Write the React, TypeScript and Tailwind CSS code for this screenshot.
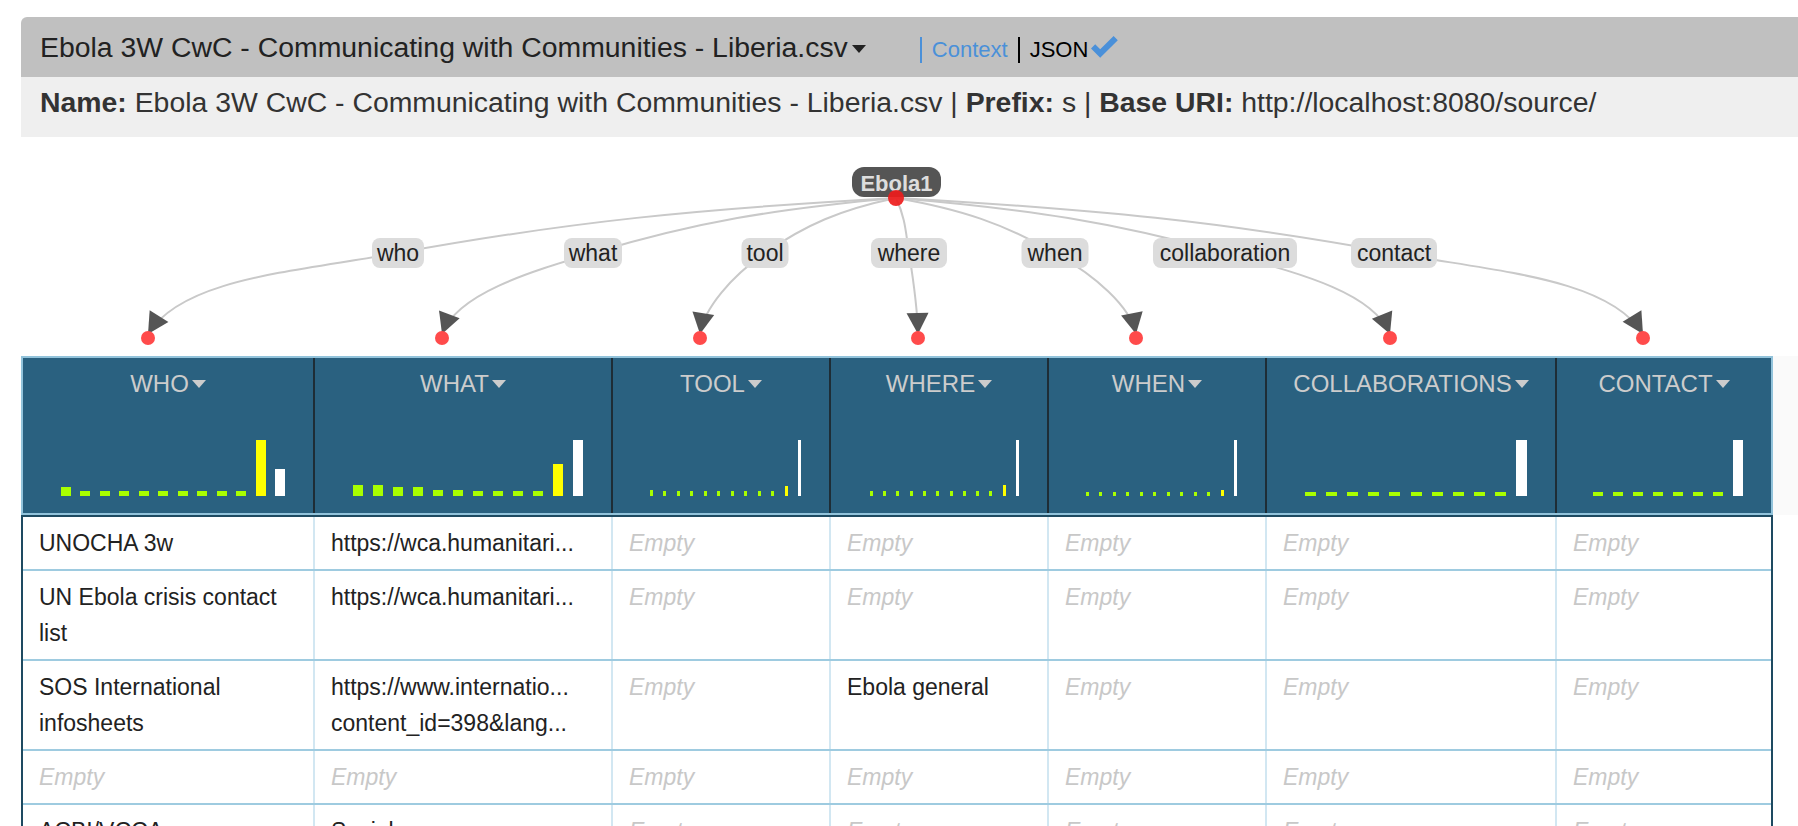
import React from "react";

type Bar = { h: number; c: "g" | "y" | "w" };

type Column = {
  title: string;
  w: number;
  gap: number;
  bars: Bar[];
};

const g = (h: number): Bar => ({ h, c: "g" });
const y = (h: number): Bar => ({ h, c: "y" });
const w = (h: number): Bar => ({ h, c: "w" });

const columns: Column[] = [
  { title: "WHO", w: 10, gap: 9.5, bars: [g(9), g(5), g(5), g(5), g(5), g(5), g(5), g(5), g(5), g(5), y(56), w(27)] },
  { title: "WHAT", w: 10, gap: 10, bars: [g(11), g(11), g(9), g(9), g(6), g(6), g(5), g(5), g(5), g(5), y(32), w(56)] },
  { title: "TOOL", w: 3, gap: 10.5, bars: [g(6), g(5), g(5), g(5), g(5), g(5), g(5), g(5), g(5), g(5), y(10), w(56)] },
  { title: "WHERE", w: 3, gap: 10.3, bars: [g(5), g(5), g(5), g(5), g(5), g(5), g(5), g(5), g(5), g(5), y(11), w(56)] },
  { title: "WHEN", w: 3, gap: 10.5, bars: [g(4), g(4), g(4), g(4), g(4), g(4), g(4), g(4), g(4), g(4), y(6), w(56)] },
  { title: "COLLABORATIONS", w: 11, gap: 10.1, bars: [g(4), g(4), g(4), g(4), g(4), g(4), g(4), g(4), g(4), g(4), w(56)] },
  { title: "CONTACT", w: 10, gap: 10, bars: [g(4), g(4), g(4), g(4), g(4), g(4), g(4), w(56)] },
];

const barColor = { g: "bg-[#a8ff00]", y: "bg-[#ffff00]", w: "bg-white" };

const E = null;
const rows: (string | string[] | null)[][] = [
  ["UNOCHA 3w", "https://wca.humanitari...", E, E, E, E, E],
  ["UN Ebola crisis contact list", "https://wca.humanitari...", E, E, E, E, E],
  ["SOS International infosheets", ["https://www.internatio...", "content_id=398&lang..."], E, "Ebola general", E, E, E],
  [E, E, E, E, E, E, E],
  ["ACBI/VCCA", "Social...", E, E, E, E, E],
  [E, E, E, E, E, E, E],
];

// graph geometry, in page coordinates
const S = { x: 896, y: 198 };
const LY = 253;
const TY = 334;
const edges = [
  { label: "who", lx: 398, lw: 52, tx: 148 },
  { label: "what", lx: 593, lw: 58, tx: 442 },
  { label: "tool", lx: 765, lw: 47, tx: 700 },
  { label: "where", lx: 909, lw: 76, tx: 918 },
  { label: "when", lx: 1055, lw: 67, tx: 1136 },
  { label: "collaboration", lx: 1225, lw: 144, tx: 1390 },
  { label: "contact", lx: 1394, lw: 86, tx: 1643 },
];

const norm = (x: number, y: number) => {
  const l = Math.hypot(x, y) || 1;
  return [x / l, y / l];
};

const edgeGeom = (lx: number, tx: number) => {
  const M = { x: lx, y: LY };
  const T = { x: tx, y: TY };
  const [dmx, dmy] = norm(T.x - S.x, T.y - S.y);
  const [dsx, dsy] = norm(M.x - S.x, (M.y - S.y) * 0.5);
  const [ax, ay] = norm(0.2 * (T.x - M.x), T.y - M.y);
  const L1 = Math.hypot(M.x - S.x, M.y - S.y);
  const L2 = Math.hypot(T.x - M.x, T.y - M.y);
  const d =
    `M${S.x},${S.y} C${S.x + dsx * L1 * 0.4},${S.y + dsy * L1 * 0.4} ${M.x - dmx * L1 * 0.35},${M.y - dmy * L1 * 0.35} ${M.x},${M.y} ` +
    `C${M.x + dmx * L2 * 0.4},${M.y + dmy * L2 * 0.4} ${T.x - ax * L2 * 0.25},${T.y - ay * L2 * 0.25} ${T.x},${T.y}`;
  const bx = T.x - ax * 21;
  const by = T.y - ay * 21;
  const px = -ay;
  const py = ax;
  const pts = `${T.x},${T.y} ${bx + px * 11},${by + py * 11} ${bx - px * 11},${by - py * 11}`;
  return { d, pts };
};

const Caret = ({ className }: { className: string }) => (
  <svg width="14" height="8" viewBox="0 0 14 8" className={className}>
    <polygon points="0,0 14,0 7,8" />
  </svg>
);

const Graph = () => (
  <svg width="1798" height="219" viewBox="0 137 1798 219" className="block">
    {edges.map((e) => {
      const { d } = edgeGeom(e.lx, e.tx);
      return <path key={e.label} d={d} fill="none" stroke="#c9c9c9" strokeWidth="2" />;
    })}
    {edges.map((e) => (
      <g key={e.label}>
        <rect x={e.lx - e.lw / 2} y={238} width={e.lw} height={30} rx={8} fill="#dcdcdc" />
        <text
          x={e.lx}
          y={261}
          textAnchor="middle"
          fontSize="23"
          fill="#222"
          fontFamily="'Liberation Sans', Arial, sans-serif"
        >
          {e.label}
        </text>
      </g>
    ))}
    {edges.map((e) => {
      const { pts } = edgeGeom(e.lx, e.tx);
      return <polygon key={e.label} points={pts} fill="#555" />;
    })}
    {edges.map((e) => (
      <circle key={e.label} cx={e.tx} cy={338} r={7} fill="#ff4b4b" />
    ))}
    {/* root node */}
    <rect x={852} y={167} width={89} height={30} rx={12} fill="#555" />
    <text
      x={896.5}
      y={191}
      textAnchor="middle"
      fontSize="22"
      fontWeight="bold"
      fill="#dddddd"
      fontFamily="'Liberation Sans', Arial, sans-serif"
    >
      Ebola1
    </text>
    <circle cx={S.x} cy={S.y} r={8} fill="#ee1c1c" opacity={0.92} />
  </svg>
);

const Cell = ({ value, first }: { value: string | string[] | null; first: boolean }) => (
  <div
    className={`min-w-0 pl-[16px] pr-[12px] py-[8px] text-[23px] leading-[36px] ${
      first ? "" : "border-l-2 border-[#d2e7f2]"
    }`}
  >
    {value === null ? (
      <span className="italic text-[#c8c8c8]">Empty</span>
    ) : Array.isArray(value) ? (
      value.map((line) => (
        <div key={line} className="truncate text-[#222]">
          {line}
        </div>
      ))
    ) : (
      <div className={first ? "text-[#222]" : "truncate text-[#222]"}>{value}</div>
    )}
  </div>
);

export default function App() {
  return (
    <div className="h-[826px] w-[1798px] overflow-hidden bg-white pt-[17px] font-['Liberation_Sans',Arial,sans-serif]">
      <div className="ml-[21px]">
        {/* title bar */}
        <div className="flex h-[60px] items-center rounded-tl-[6px] bg-[#c0c0c0] pl-[19px] text-[#222]">
          <span className="text-[28.4px] leading-[40px]">
            Ebola 3W CwC - Communicating with Communities - Liberia.csv
          </span>
          <Caret className="ml-[4px] mt-[4px] fill-[#222]" />
          <div className="ml-[54px] mt-[6px] flex items-center">
            <span className="border-l-2 border-[#4a90d9] pl-[10px] text-[22px] leading-[26px] text-[#4a90d9]">
              Context
            </span>
            <span className="ml-[10px] border-l-2 border-black pl-[10px] text-[22px] leading-[26px] text-black">
              JSON
            </span>
            <svg width="27" height="23" viewBox="0 0 27 23" className="mb-[6px] ml-[3px]">
              <path d="M0,12.5 L4.2,8.3 L9.2,13.3 L22.6,0 L26.8,4.2 L9.2,21.8 Z" fill="#4a90d9" />
            </svg>
          </div>
        </div>
        {/* name row */}
        <div className="h-[60px] bg-[#efefef] pl-[19px] pt-[5px] text-[28.4px] leading-[40px] text-[#333]">
          <b>Name:</b> Ebola 3W CwC - Communicating with Communities - Liberia.csv | <b>Prefix:</b> s |{" "}
          <b>Base URI:</b> http://localhost:8080/source/
        </div>
      </div>

      <Graph />

      {/* table header */}
      <div className="flex">
        <div className="ml-[21px] grid w-[1752px] grid-cols-[290px_298px_218px_218px_218px_290px_216px] border-2 border-[#92c3db] bg-[#2a6180]">
          {columns.map((col, i) => (
            <div
              key={col.title}
              className={`flex flex-col pt-[10px] pb-[17px] ${i === 0 ? "" : "border-l-2 border-[#1e2d36]"}`}
            >
              <div className="flex items-center justify-center text-[24px] leading-[32px] text-[#cccccc]">
                {col.title}
                <Caret className="ml-[3px] fill-[#cccccc]" />
              </div>
              <div className="mt-[40px] flex h-[56px] items-end justify-end pr-[28px]">
                {col.bars.map((b, j) => (
                  <div
                    key={j}
                    className={`shrink-0 ${barColor[b.c]}`}
                    style={{ width: col.w, height: b.h, marginLeft: j === 0 ? 0 : col.gap }}
                  />
                ))}
              </div>
            </div>
          ))}
        </div>
        <div className="flex-1 bg-[#fafafa]" />
      </div>

      {/* table body */}
      <div className="ml-[21px] w-[1752px] border-x-2 border-t-2 border-[#1e4a61]">
        {rows.map((row, r) => (
          <div
            key={r}
            className="grid grid-cols-[290px_298px_218px_218px_218px_290px_216px] border-b-2 border-[#9ecbe0]"
          >
            {row.map((v, c) => (
              <Cell key={c} value={v} first={c === 0} />
            ))}
          </div>
        ))}
      </div>
    </div>
  );
}
